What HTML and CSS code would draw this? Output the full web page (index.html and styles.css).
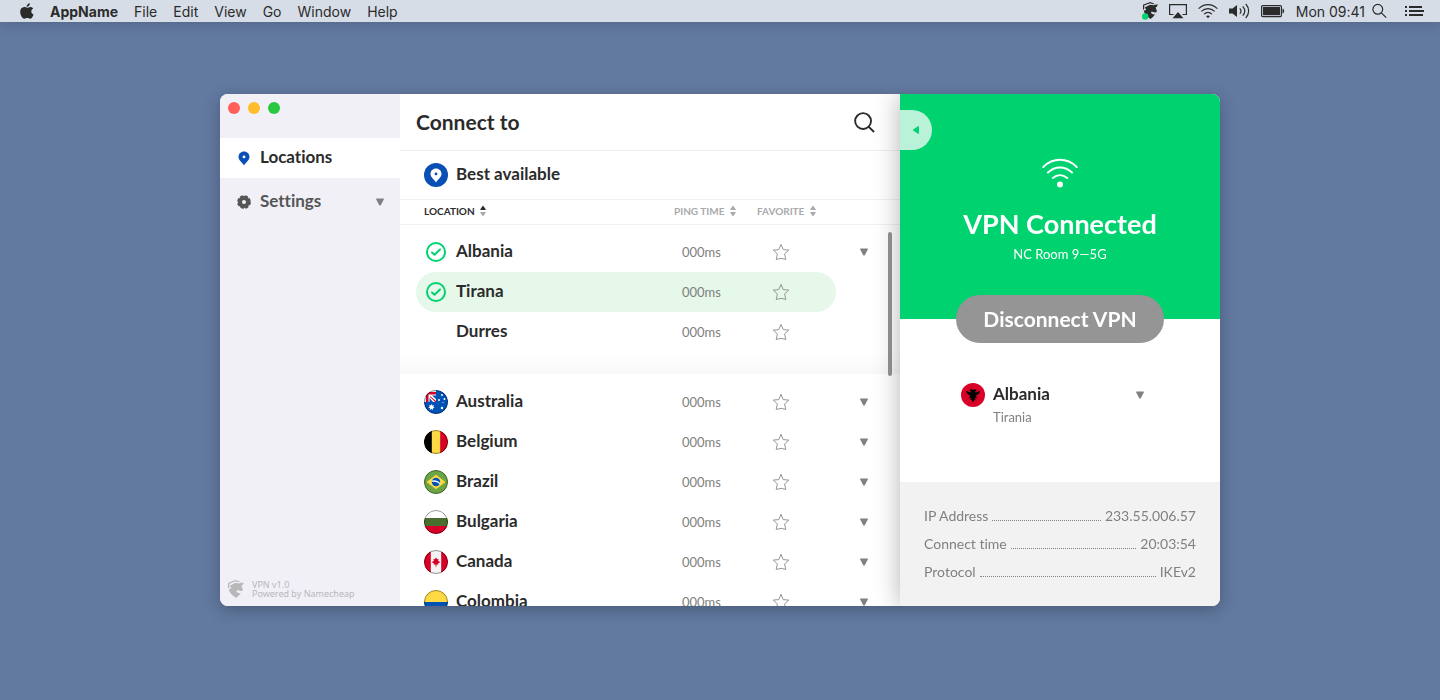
FILE: index.html
```
<!DOCTYPE html>
<html lang="en">
<head>
  <meta charset="UTF-8">
  <meta name="viewport" content="width=device-width, initial-scale=1.0">
  <title>VPN</title>
  <link rel="stylesheet" href="styles.css">
</head>
<body>
  <!-- shared icons -->
  <svg class="sprite" aria-hidden="true">
    <symbol id="pin" viewBox="0 0 12 15">
      <path fill-rule="evenodd" d="M6 .5C2.900.5.500 2.900.500 5.800c0 3.500 3.600 5.700 5.500 8.700 1.900-3 5.500-5.200 5.500-8.700C11.500 2.900 9.100.5 6 .5zm0 4a1.400 1.400 0 1 1 0 2.800 1.400 1.400 0 0 1 0-2.800z"/>
    </symbol>
    <symbol id="down" viewBox="0 0 8 8">
      <path d="M.6.500h6.800c.5 0 .7.400.5.800L4.900 7c-.4.700-1.400.7-1.800 0L.1 1.300C-.1.900.1.500.600.500z"/>
    </symbol>
    <symbol id="sort" viewBox="0 0 6 12">
      <path class="sort-up" d="M3 .500 5.700 4.200c.2.400 0 .8-.4.800H.700C.3 5 .1 4.600.3 4.200z"/>
      <path d="M3 11.500 5.700 7.800c.2-.4 0-.8-.4-.8H.700C.3 7 .1 7.400.3 7.800z"/>
    </symbol>
    <symbol id="star" viewBox="0 0 18 18">
      <path d="M9 1.400l2.200 5.200 5.600.5-4.200 3.800 1.200 5.600L9 15.300l-4.800 1.200 1.200-5.600L1.200 7.100l5.600-.5z" fill="none" stroke="#959595" stroke-linejoin="round"/>
    </symbol>
    <symbol id="check" viewBox="0 0 24 24">
      <circle cx="12" cy="12" r="9" fill="none" stroke="#00d270" stroke-width="2"/>
      <path d="M8 12.500l2.500 2.300L16 9.500" fill="none" stroke="#00d270" stroke-width="2" stroke-linecap="round" stroke-linejoin="round"/>
    </symbol>
    <symbol id="dragon" viewBox="0 0 16 18">
      <path d="M0 3 7.500 0l4.500 1.600-1.500.7L7.500 1.300 1.300 3.800v3.700L0 8.500z"/>
      <path d="M1.800 5.800 7.500 2.800l4 .6L13.500 2l-.3 1.400 2.600-1.200L15 4.800l-1.600 1 1.400 3.700-.8 1.700-2.200-.4-2.600-.8-.8 1.700 2.500 1.500 1.900-.1-1.700 2.200L8 18l-3.500-2.700L2 12.500.8 9.700 3.400 8z"/>
    </symbol>
    <clipPath id="round"><circle cx="12" cy="12" r="12"/></clipPath>
  </svg>

  <header class="menubar">
    <nav class="menu">
      <button aria-label="Apple menu">
        <svg width="14" height="16" viewBox="0 0 14 16" fill="#2b2b2b">
          <path d="M9.800.2c.1 1-.3 1.900-.9 2.600S7.500 4 6.600 3.900c-.1-.9.300-1.800.9-2.500S9 .3 9.800.2z"/>
          <path d="M11.300 8.400c0-1.500.8-2.400 1.900-3-.7-1-1.700-1.500-3-1.500-1.200 0-2.300.8-3 .8S5.400 4 4.300 4C1.900 4.100.2 5.900.2 8.800c0 3.400 2.300 7 4.200 7 1 0 1.500-.7 2.800-.7s1.800.7 2.800.7c1.500 0 2.900-2.200 3.600-4.300-1.400-.6-2.300-1.700-2.300-3.100z"/>
        </svg>
      </button>
      <button class="app-name">AppName</button>
      <button>File</button>
      <button>Edit</button>
      <button>View</button>
      <button>Go</button>
      <button>Window</button>
      <button>Help</button>
    </nav>
    <div class="tray">
      <svg width="16" height="18" viewBox="0 0 16 18" fill="#2b2b2b">
        <g transform="translate(1 0) scale(.94)"><use href="#dragon" width="16" height="18"/></g>
        <circle cx="3.200" cy="14.500" r="3.200" fill="#00d270"/>
      </svg>
      <svg width="18" height="16" viewBox="0 0 18 16" fill="none" stroke="#2b2b2b" stroke-width="1.200">
        <path d="M4.500 11.500H.6V1.600h16.800v9.900h-3.900"/>
        <path d="M9 9l5.500 6.200h-11z" fill="#2b2b2b" stroke="none"/>
      </svg>
      <svg width="20" height="16" viewBox="0 0 20 16" fill="none" stroke="#2b2b2b" stroke-width="1.200">
        <path d="M.6 5.600c5.400-5.400 13.400-5.400 18.800 0M3.300 8.400c4-3.800 9.400-3.800 13.400 0M6 11.100c2.500-2.200 5.500-2.200 8 0"/>
        <path d="M10 15.200l-2-2.100c1.200-.9 2.800-.9 4 0z" fill="#2b2b2b" stroke="none"/>
      </svg>
      <svg width="21" height="16" viewBox="0 0 21 16" fill="none" stroke="#2b2b2b" stroke-width="1.200">
        <path d="M0 5.500h3.500L8 2v12l-4.500-3.500H0z" fill="#2b2b2b" stroke="none"/>
        <path d="M10.800 5.300c1.400 1.600 1.400 3.800 0 5.400M13.700 3.300c2.500 2.800 2.500 6.600 0 9.400M16.800 1c3.800 4.200 3.800 9.800 0 14"/>
      </svg>
      <svg width="24" height="14" viewBox="0 0 24 14" fill="#2b2b2b">
        <rect x=".6" y="1.600" width="19.800" height="11" rx="1" fill="none" stroke="#2b2b2b" stroke-width="1.200"/>
        <rect x="2" y="3" width="17" height="8.200"/>
        <path d="M21.500 4.600c2.200.6 2.200 4.400 0 5z"/>
      </svg>
      <time>Mon 09:41</time>
      <svg class="tray-search" width="15" height="16" viewBox="0 0 15 16" fill="none" stroke="#2b2b2b" stroke-width="1.200">
        <circle cx="5.800" cy="6.300" r="4.900"/>
        <path d="M9.400 9.900l4.800 4.800"/>
      </svg>
      <svg width="19" height="12" viewBox="0 0 19 12" stroke="#2b2b2b" stroke-width="2">
        <path d="M0 2h2M4 2h13M0 6h2M4 6h15M0 10h2M4 10h14"/>
      </svg>
    </div>
  </header>

  <main class="window">
    <aside class="sidebar">
      <div class="lights">
        <button class="close" aria-label="Close"></button>
        <button class="minimize" aria-label="Minimize"></button>
        <button class="zoom" aria-label="Zoom"></button>
      </div>
      <nav class="side-nav">
        <a class="active" href="#locations">
          <svg width="16" height="15" fill="#0a4fb4"><use href="#pin"/></svg>
          <span>Locations</span>
        </a>
        <a href="#settings">
          <svg width="16" height="16" viewBox="0 0 16 16">
            <circle cx="8" cy="8" r="6" fill="#555"/>
            <circle cx="8" cy="8" r="6" fill="none" stroke="#555" stroke-width="1.800" stroke-dasharray="3.200 1.512"/>
            <circle cx="8" cy="8" r="2" fill="#f1f0f6"/>
          </svg>
          <span>Settings</span>
          <svg class="arrow" width="8" height="8"><use href="#down"/></svg>
        </a>
      </nav>
      <footer class="version">
        <svg width="16" height="18" fill="#b8b8bb"><use href="#dragon"/></svg>
        <p>VPN v1.0<br>Powered by Namecheap</p>
      </footer>
    </aside>

    <section class="locations" id="locations">
      <div class="title-bar">
        <h1>Connect to</h1>
        <button aria-label="Search">
          <svg width="21" height="21" viewBox="0 0 22 22" fill="none" stroke="#2b2b2b" stroke-width="2">
            <circle cx="9.500" cy="9.500" r="8.300"/>
            <path d="M15 15l6 6"/>
          </svg>
        </button>
      </div>
      <button class="best">
        <svg width="24" height="24" viewBox="0 0 24 24">
          <circle cx="12" cy="12" r="12" fill="#0a4fb4"/>
          <use href="#pin" x="6" y="5" width="12" height="15" fill="#fff"/>
        </svg>
        <span>Best available</span>
      </button>

      <div class="scroll">
        <table>
          <thead>
            <tr>
              <th class="sorted">Location <svg width="6" height="12"><use href="#sort"/></svg></th>
              <th class="ping">Ping time <svg width="6" height="12"><use href="#sort"/></svg></th>
              <th class="fav">Favorite <svg width="6" height="12"><use href="#sort"/></svg></th>
              <th class="more"></th>
            </tr>
          </thead>
          <tbody>
            <tr class="first">
              <td><div class="place"><svg width="24" height="24"><use href="#check"/></svg><span>Albania</span></div></td>
              <td class="ping">000ms</td>
              <td class="fav"><button aria-label="Favorite Albania"><svg width="18" height="18"><use href="#star"/></svg></button></td>
              <td class="more"><button aria-label="Albania cities"><svg class="arrow" width="8" height="8"><use href="#down"/></svg></button></td>
            </tr>
            <tr class="selected">
              <td><div class="place"><svg width="24" height="24"><use href="#check"/></svg><span>Tirana</span></div></td>
              <td class="ping">000ms</td>
              <td class="fav"><button aria-label="Favorite Tirana"><svg width="18" height="18"><use href="#star"/></svg></button></td>
              <td></td>
            </tr>
            <tr>
              <td><div class="place city"><span>Durres</span></div></td>
              <td class="ping">000ms</td>
              <td class="fav"><button aria-label="Favorite Durres"><svg width="18" height="18"><use href="#star"/></svg></button></td>
              <td></td>
            </tr>
            <tr class="group-end"><td colspan="4"></td></tr>
          </tbody>
          <tbody>
            <tr>
              <td><div class="place">
                <svg class="flag" width="24" height="24" viewBox="0 0 24 24">
                  <g clip-path="url(#round)">
                    <path fill="#0052b4" d="M0 0h24v24H0z"/>
                    <path fill="#fff" d="M0 0h12v12H0z"/>
                    <path fill="#d80027" d="M0 2h12v2.500H4.500V12H2V2zM6 6l6 5v1h-.800L6 7z"/>
                    <path fill="#0052b4" d="M8 5.500h4V9zM5.500 8v4H9z"/>
                    <path fill="#fff" d="M7.500 14l.8 1.500 1.600-.4-.6 1.600 1.300 1-1.600.5.1 1.700-1.600-.9-1.600.9.1-1.700-1.600-.5 1.300-1-.6-1.600 1.600.4z"/>
                    <g fill="#fff"><circle cx="18" cy="5" r="1"/><circle cx="15" cy="10" r="1"/><circle cx="20.500" cy="9" r="1"/><circle cx="18" cy="18" r="1.200"/><circle cx="19" cy="12.500" r=".6"/></g>
                  </g>
                </svg><span>Australia</span></div></td>
              <td class="ping">000ms</td>
              <td class="fav"><button aria-label="Favorite Australia"><svg width="18" height="18"><use href="#star"/></svg></button></td>
              <td class="more"><button aria-label="Australia cities"><svg class="arrow" width="8" height="8"><use href="#down"/></svg></button></td>
            </tr>
            <tr>
              <td><div class="place">
                <svg class="flag" width="24" height="24" viewBox="0 0 24 24">
                  <g clip-path="url(#round)">
                    <path fill="#ffda44" d="M0 0h24v24H0z"/>
                    <path d="M0 0h7.800v24H0z"/>
                    <path fill="#d80027" d="M16.200 0H24v24h-7.800z"/>
                  </g>
                </svg><span>Belgium</span></div></td>
              <td class="ping">000ms</td>
              <td class="fav"><button aria-label="Favorite Belgium"><svg width="18" height="18"><use href="#star"/></svg></button></td>
              <td class="more"><button aria-label="Belgium cities"><svg class="arrow" width="8" height="8"><use href="#down"/></svg></button></td>
            </tr>
            <tr>
              <td><div class="place">
                <svg class="flag" width="24" height="24" viewBox="0 0 24 24">
                  <circle cx="12" cy="12" r="12" fill="#6da544"/>
                  <path fill="#ffda44" d="M12 4.700 21.400 12 12 19.300 2.600 12z"/>
                  <circle cx="12" cy="12" r="4.200" fill="#0052b4"/>
                  <path d="M8 11.200c3-.6 6 .3 7.900 2.500" fill="none" stroke="#fff" stroke-width="1.300"/>
                </svg><span>Brazil</span></div></td>
              <td class="ping">000ms</td>
              <td class="fav"><button aria-label="Favorite Brazil"><svg width="18" height="18"><use href="#star"/></svg></button></td>
              <td class="more"><button aria-label="Brazil cities"><svg class="arrow" width="8" height="8"><use href="#down"/></svg></button></td>
            </tr>
            <tr>
              <td><div class="place">
                <svg class="flag" width="24" height="24" viewBox="0 0 24 24">
                  <g clip-path="url(#round)">
                    <path fill="#fff" d="M0 0h24v8H0z"/>
                    <path fill="#496e2d" d="M0 8h24v8H0z"/>
                    <path fill="#d80027" d="M0 16h24v8H0z"/>
                  </g>
                </svg><span>Bulgaria</span></div></td>
              <td class="ping">000ms</td>
              <td class="fav"><button aria-label="Favorite Bulgaria"><svg width="18" height="18"><use href="#star"/></svg></button></td>
              <td class="more"><button aria-label="Bulgaria cities"><svg class="arrow" width="8" height="8"><use href="#down"/></svg></button></td>
            </tr>
            <tr>
              <td><div class="place">
                <svg class="flag" width="24" height="24" viewBox="0 0 24 24">
                  <g clip-path="url(#round)">
                    <path fill="#f4f4f4" d="M0 0h24v24H0z"/>
                    <path fill="#d80027" d="M0 0h6.800v24H0zM17.200 0H24v24h-6.800zM12 7.500l1.200 1.800 1.300-.5-.3 2.200 2.200.9-2.300 1.700.2 1-1.800-.2v2.200h-1v-2.200l-1.800.2.200-1-2.300-1.700 2.200-.9-.3-2.200 1.300.5z"/>
                  </g>
                </svg><span>Canada</span></div></td>
              <td class="ping">000ms</td>
              <td class="fav"><button aria-label="Favorite Canada"><svg width="18" height="18"><use href="#star"/></svg></button></td>
              <td class="more"><button aria-label="Canada cities"><svg class="arrow" width="8" height="8"><use href="#down"/></svg></button></td>
            </tr>
            <tr>
              <td><div class="place">
                <svg class="flag" width="24" height="24" viewBox="0 0 24 24">
                  <g clip-path="url(#round)">
                    <path fill="#ffda44" d="M0 0h24v12H0z"/>
                    <path fill="#0052b4" d="M0 12h24v6H0z"/>
                    <path fill="#d80027" d="M0 18h24v6H0z"/>
                  </g>
                </svg><span>Colombia</span></div></td>
              <td class="ping">000ms</td>
              <td class="fav"><button aria-label="Favorite Colombia"><svg width="18" height="18"><use href="#star"/></svg></button></td>
              <td class="more"><button aria-label="Colombia cities"><svg class="arrow" width="8" height="8"><use href="#down"/></svg></button></td>
            </tr>
          </tbody>
        </table>
      </div>
      <div class="thumb"></div>
    </section>

    <section class="panel">
      <button class="collapse" aria-label="Collapse locations">
        <svg width="6" height="8" viewBox="0 0 6 8" fill="#00d270"><path d="M6 .700v6.600c0 .5-.5.700-.9.500L.5 4.700a.8.800 0 0 1 0-1.400L5.100.2c.4-.2.900 0 .9.500z"/></svg>
      </button>
      <div class="status">
        <svg width="36" height="30" viewBox="0 0 36 30" fill="none" stroke="#fff" stroke-width="2" stroke-linecap="round">
          <path d="M1.300 9C10.800-.6 25.200-.6 34.700 9M6 14.500c7-6.600 17-6.600 24 0M10.800 20c4.400-3.700 10-3.700 14.400 0"/>
          <circle cx="18" cy="26.500" r="3" fill="#fff" stroke="none"/>
        </svg>
        <h2>VPN Connected</h2>
        <p>NC Room 9—5G</p>
      </div>
      <button class="disconnect">Disconnect VPN</button>
      <div class="current">
        <div class="country">
          <svg width="24" height="24" viewBox="0 0 24 24">
            <circle cx="12" cy="12" r="12" fill="#d80027"/>
            <path d="M9.300 6.500l1.700-.3 1 .8 1-.8 1.700.3.8 1.200-1.300.6.200 1.200 1.600-.4 3.200-1.300-.9 2.300-1.700 1.700-1.900.6 1.400 2.900-2-.4-.4 1.200 1.400 1-1.700 0L12 19.500l-1.400-2.400-1.700 0 1.400-1-.4-1.200-2 .4 1.400-2.900-1.900-.6-1.700-1.700-.9-2.300L8 9.100l1.600.4.200-1.200-1.300-.6z"/>
          </svg>
          <select aria-label="Country">
            <option>Albania</option>
            <option>Australia</option>
            <option>Belgium</option>
            <option>Brazil</option>
          </select>
          <svg class="arrow" width="8" height="8"><use href="#down"/></svg>
        </div>
        <p>Tirania</p>
      </div>
      <dl class="details">
        <div><dt>IP Address</dt><dd>233.55.006.57</dd></div>
        <div><dt>Connect time</dt><dd>20:03:54</dd></div>
        <div><dt>Protocol</dt><dd>IKEv2</dd></div>
      </dl>
    </section>
  </main>
</body>
</html>
```
FILE: styles.css
```
* {
  box-sizing: border-box;
}
body {
  margin: 0;
  min-height: 100vh;
  background: #6279a0;
  color: #2b2b2b;
  font-family: Lato, "Open Sans", sans-serif;
  font-variant-ligatures: none;
}
h1, h2, p, dl, dd {
  margin: 0;
}
button, select {
  padding: 0;
  border: none;
  background: none;
  color: inherit;
  font: inherit;
  cursor: pointer;
}
svg {
  display: block;
  flex: none;
}
.sprite {
  position: absolute;
  width: 0;
  height: 0;
}
.arrow {
  fill: #808080;
}

/* system menu bar */
.menubar {
  display: flex;
  justify-content: space-between;
  align-items: center;
  height: 22px;
  padding: 0 16px 0 20px;
  background: #d6dde7;
  box-shadow: 0 0 16px rgba(0, 0, 0, 0.2);
  font-family: Inter, sans-serif;
  font-size: 14px;
}
.menu, .tray {
  display: flex;
  align-items: center;
}
.menu {
  gap: 16px;
}
.tray {
  gap: 11px;
}
.app-name {
  font-weight: 700;
}
.tray-search {
  margin: 0 7px 0 -4px;
}

.window {
  display: flex;
  height: calc(100vh - 188px);
  min-height: 480px;
  max-width: 1000px;
  margin: 72px auto 0;
  border-radius: 8px;
  background: #fff;
  box-shadow: 0 4px 16px rgba(0, 0, 0, 0.25);
  overflow: hidden;
}

/* left column */
.sidebar {
  display: flex;
  flex-direction: column;
  flex: none;
  width: 180px;
  background: #f1f0f6;
}
.lights {
  display: flex;
  gap: 8px;
  padding: 8px 8px 24px;
}
.lights button {
  width: 12px;
  height: 12px;
  border-radius: 50%;
}
.close {
  background: #ff5f57;
}
.minimize {
  background: #ffbd2e;
}
.zoom {
  background: #28c940;
}
.side-nav {
  display: flex;
  flex-direction: column;
  gap: 4px;
}
.side-nav a {
  display: flex;
  align-items: center;
  gap: 8px;
  height: 40px;
  padding: 0 16px;
  color: #555;
  font-size: 17px;
  font-weight: 700;
  text-decoration: none;
}
.side-nav a.active {
  background: #fff;
  color: #2b2b2b;
}
.side-nav span, .best span, .place span {
  padding-bottom: 4px;
}
.side-nav span {
  flex: 1;
}
.version {
  display: flex;
  align-items: center;
  gap: 8px;
  margin-top: auto;
  padding: 8px;
  color: #b8b8bb;
  font-family: "Noto Sans", sans-serif;
  font-size: 9px;
  line-height: 9px;
}

/* location list */
.locations {
  position: relative;
  display: flex;
  flex-direction: column;
  flex: 1;
  min-width: 0;
}
.title-bar {
  display: flex;
  justify-content: space-between;
  align-items: center;
  height: 57px;
  padding: 0 25px 0 16px;
  border-bottom: 1px solid #f0f0f0;
}
h1 {
  padding-bottom: 2px;
  font-size: 21px;
  font-weight: 700;
}
.best {
  display: flex;
  align-items: center;
  gap: 8px;
  height: 48px;
  padding: 0 24px;
  font-size: 17px;
  font-weight: 700;
}
.scroll {
  flex: 1;
  min-height: 0;
  overflow-y: auto;
  scrollbar-width: none;
}
table {
  width: 100%;
  border-collapse: separate;
  border-spacing: 0;
}
th, td {
  padding: 0;
  text-align: left;
}
th {
  position: sticky;
  top: 0;
  height: 26px;
  border-top: 1px solid #f0f0f0;
  border-bottom: 1px solid #f0f0f0;
  background: #fff;
  color: #aaa;
  font-size: 10px;
  font-weight: 700;
  text-transform: uppercase;
  white-space: nowrap;
}
th svg {
  display: inline-block;
  margin: 0 0 2px 3px;
  fill: #aaa;
  vertical-align: middle;
}
th.sorted {
  padding-left: 24px;
  color: #2b2b2b;
}
.sort-up {
  fill: currentColor;
}
th.ping, th.fav {
  padding-left: 8px;
}
.ping {
  width: 83px;
}
.fav {
  width: 87px;
}
.more {
  width: 64px;
}
td {
  height: 40px;
}
td:first-child {
  padding-left: 16px;
}
.first td {
  height: 47px;
  padding-top: 7px;
}
.place {
  display: flex;
  align-items: center;
  gap: 8px;
  height: 40px;
  padding-left: 8px;
  font-size: 17px;
  font-weight: 700;
}
.place.city {
  padding-left: 40px;
}
.flag {
  border-radius: 50%;
  outline: 1px solid rgba(0, 0, 0, 0.4);
  outline-offset: -1px;
}
td button {
  display: block;
}
td.ping {
  padding-left: 16px;
  padding-bottom: 1px;
  color: #808080;
  font-size: 13px;
}
td.fav {
  padding-left: 23px;
}
td.more {
  padding-left: 24px;
}
.selected .place {
  border-radius: 20px 0 0 20px;
}
.selected .fav {
  border-radius: 0 20px 20px 0;
}
.selected .place, .selected .ping, .selected .fav {
  background: #e6f8ea;
}
.group-end td {
  height: 30px;
  background: linear-gradient(#fff, #f8f8f8) no-repeat 0 0 / 100% 22px;
}
.thumb {
  position: absolute;
  top: 138px;
  right: 8px;
  width: 4px;
  height: 144px;
  border-radius: 2px;
  background: #959595;
}

/* connection panel */
.panel {
  position: relative;
  z-index: 1;
  display: flex;
  flex-direction: column;
  flex: none;
  width: 320px;
  background: #fff;
  box-shadow: 0 0 24px rgba(0, 0, 0, 0.3);
}
.collapse {
  position: absolute;
  top: 16px;
  left: 0;
  display: flex;
  align-items: center;
  justify-content: center;
  width: 32px;
  height: 40px;
  border-radius: 0 20px 20px 0;
  background: #b9f2d8;
}
.status {
  display: flex;
  flex-direction: column;
  align-items: center;
  padding: 64px 20px 55px;
  background: #00d270;
  color: #fff;
}
h2 {
  margin-top: 20px;
  font-size: 27px;
  font-weight: 700;
  line-height: 32px;
}
.status p {
  margin-top: 4px;
  font-size: 13px;
  line-height: 20px;
}
.disconnect {
  align-self: center;
  width: 208px;
  height: 48px;
  margin-top: -24px;
  padding-bottom: 2px;
  border-radius: 24px;
  background: #959595;
  color: #fff;
  font-size: 21px;
  font-weight: 700;
}
.current {
  flex: 1;
  padding: 40px 76px 0 61px;
}
.country {
  display: flex;
  align-items: center;
  gap: 8px;
}
.country select {
  flex: 1;
  height: 24px;
  padding-bottom: 4px;
  appearance: none;
  font-size: 17px;
  font-weight: 700;
}
.current p {
  padding-left: 32px;
  color: #808080;
  font-size: 13px;
  line-height: 20px;
}
.details {
  padding: 20px 24px;
  background: #f2f2f2;
  color: #808080;
  font-size: 14px;
  line-height: 28px;
}
.details div {
  display: flex;
}
.details div::before {
  content: "";
  flex: 1;
  order: 1;
  height: 18px;
  margin: 0 4px;
  border-bottom: 1px dotted #808080;
}
.details dd {
  order: 2;
}
```
